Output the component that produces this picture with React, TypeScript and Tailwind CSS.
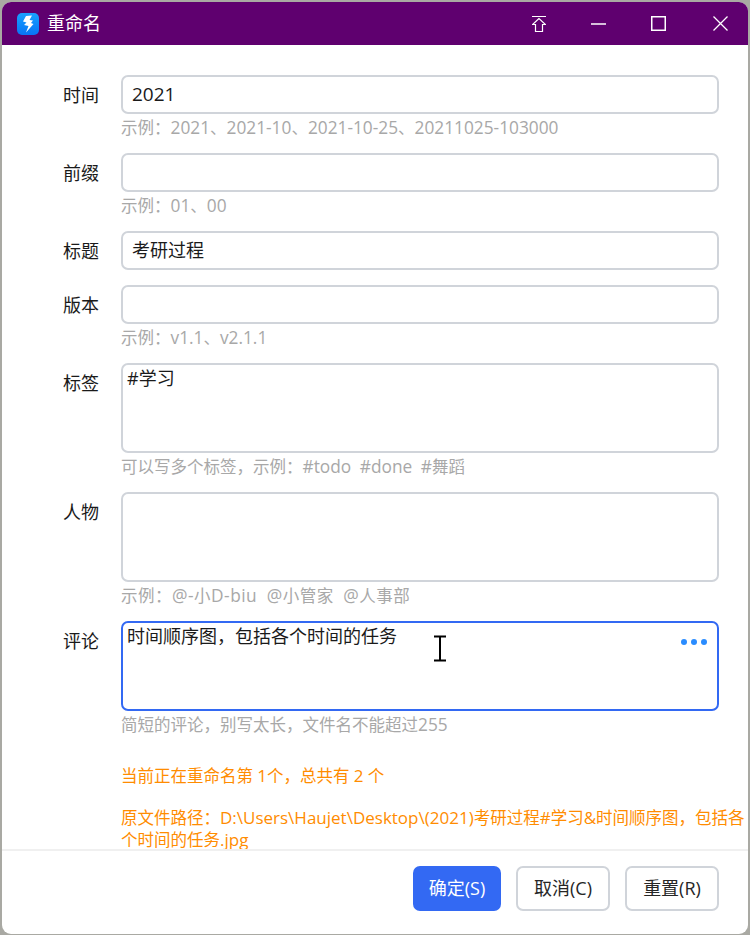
const font = "font-['Open_Sans','Noto_Sans_CJK_SC',sans-serif]";

// latin runs sit a bit larger than the CJK ones in the small text
function Mixed({ text, latin }: { text: string; latin: string }) {
  return (
    <>
      {text.split(/([\x21-\x7e]+)/).map((part, i) =>
        i % 2 === 1 ? <span key={i} className={latin}>{part}</span> : part
      )}
    </>
  );
}

function Label({ text }: { text: string }) {
  return <div className="w-[97px] shrink-0 pt-[8px] text-right text-[18px] leading-[24px] text-[#1a1a1a]">{text}</div>;
}

function Hint({ text, wide }: { text: string; wide?: boolean }) {
  return (
    <div className={`h-[24px] pt-[2px] text-[16.5px] leading-[24px] whitespace-pre text-[#a8a8a8] ${wide ? "tracking-[0.5px]" : ""}`}>
      <Mixed text={text} latin="text-[17.3px]" />
    </div>
  );
}

function Row({ label, value, hint, tall, focus, small, wide }: { label: string; value?: string; hint?: string; tall?: boolean; focus?: boolean; small?: boolean; wide?: boolean }) {
  const border = focus ? "border-[#3369f3]" : "border-[#d0d4da]";
  return (
    <div className="flex pb-[15px]">
      <Label text={label} />
      <div className="ml-[22px] w-[598px]">
        {tall ? (
          <div className={`relative h-[90px] rounded-[7px] border-2 bg-white px-[4px] py-[1px] text-[18px] leading-[24px] text-[#1a1a1a] ${border}`}>
            {value}
            {focus && (
              <div className="absolute top-[16px] right-[10px] flex gap-[4px]">
                <span className="h-[6px] w-[6px] rounded-full bg-[#2a8cff]" />
                <span className="h-[6px] w-[6px] rounded-full bg-[#2a8cff]" />
                <span className="h-[6px] w-[6px] rounded-full bg-[#2a8cff]" />
              </div>
            )}
          </div>
        ) : (
          <div className={`flex h-[39px] items-center rounded-[7px] border-2 bg-white px-[9px] text-[#1a1a1a] ${small ? "text-[18px]" : "text-[19px]"} ${border}`}>{value}</div>
        )}
        {hint && <Hint text={hint} wide={wide} />}
      </div>
    </div>
  );
}

function FooterButton({ text, primary }: { text: string; primary?: boolean }) {
  return (
    <button className={`h-[45px] rounded-[7px] text-[18px] ${primary ? "w-[88px] bg-[#3369f3] text-white" : "w-[94px] border-2 border-[#d0d4da] bg-white text-[#262626]"}`}>
      {text}
    </button>
  );
}

export default function App() {
  return (
    <div className={`h-[935px] w-[750px] overflow-hidden bg-[#a9a9a3] p-[2px] pb-[1px] ${font}`}>
      <div className="flex h-full flex-col overflow-hidden rounded-[9px] bg-white">
        <div className="flex h-[43px] shrink-0 items-center bg-[#5f006f] text-white">
          <div className="ml-[15px] flex h-[22px] w-[22px] items-center justify-center rounded-[5px] bg-gradient-to-b from-[#1aa0ff] to-[#0b74f5]">
            <svg width="14" height="18" viewBox="0 0 14 18">
              <path d="M5 1 11 .5 8.500 5 12 5.500 10 8 12.500 9 5 17.500 7.500 11 3 10 5.500 7.500 2 6.500z" fill="white" />
            </svg>
          </div>
          <span className="ml-[8px] text-[18px]">重命名</span>
          <div className="ml-auto flex items-center">
            <svg width="14" height="16" viewBox="0 0 14 16" fill="none" stroke="white" strokeWidth="1.2" className="mr-[45px]">
              <path d="M0 .5h14" />
              <path d="M7 2.500 .5 8.500h3v7h7v-7h3z" />
            </svg>
            <svg width="15" height="2" viewBox="0 0 15 2" className="mr-[45px]">
              <path d="M0 1h15" stroke="white" strokeWidth="1.3" />
            </svg>
            <svg width="15" height="15" viewBox="0 0 15 15" fill="none" className="mr-[47px]">
              <rect x="0.75" y="0.75" width="13.5" height="13.5" stroke="white" strokeWidth="1.5" />
            </svg>
            <svg width="15" height="15" viewBox="0 0 15 15" fill="none" stroke="white" strokeWidth="1.3" className="mr-[20px]">
              <path d="M.5.500l14 14M14.500.500l-14 14" />
            </svg>
          </div>
        </div>

        <div className="h-[804px] shrink-0 pt-[30px]">
          <Row label="时间" value="2021" hint="示例&#xFF1A;2021、2021-10、2021-10-25、20211025-103000" />
          <Row label="前缀" hint="示例&#xFF1A;01、00" />
          <Row label="标题" value="考研过程" small />
          <Row label="版本" hint="示例&#xFF1A;v1.1、v2.1.1" />
          <Row label="标签" value="#学习" tall hint="可以写多个标签&#xFF0C;示例&#xFF1A;#todo  #done  #舞蹈" />
          <Row label="人物" tall wide hint="示例&#xFF1A;@-小D-biu  @小管家  @人事部" />
          <Row label="评论" value="时间顺序图&#xFF0C;包括各个时间的任务" tall focus hint="简短的评论&#xFF0C;别写太长&#xFF0C;文件名不能超过255" />
          <div className="ml-[119px] w-[627px] text-[16.5px] leading-[22px] whitespace-nowrap text-[#ff8c00]">
            <div className="pt-[15px]"><Mixed text="当前正在重命名第 1个&#xFF0C;总共有 2 个" latin="text-[17px]" /></div>
            <div className="mt-[20px]"><Mixed text="原文件路径&#xFF1A;D:\Users\Haujet\Desktop\(2021)考研过程#学习&amp;时间顺序图&#xFF0C;包括各" latin="text-[17px]" /></div>
            <div className="mt-[2px] leading-[18px]"><Mixed text="个时间的任务.jpg" latin="text-[17px]" /></div>
          </div>
        </div>

        <div className="relative flex h-[84px] items-start justify-end gap-[15px] border-t-2 border-[#f0f0f0] pt-[15px] pr-[29px]">
          <FooterButton text="确定(S)" primary />
          <FooterButton text="取消(C)" />
          <FooterButton text="重置(R)" />
        </div>
      </div>
      <svg width="14" height="28" viewBox="0 0 14 28" className="absolute top-[635px] left-[433px]" fill="none" stroke="black" strokeWidth="2">
        <path d="M1 1.500h12M1 25.500h12M7 1.500v24" />
      </svg>
    </div>
  );
}
